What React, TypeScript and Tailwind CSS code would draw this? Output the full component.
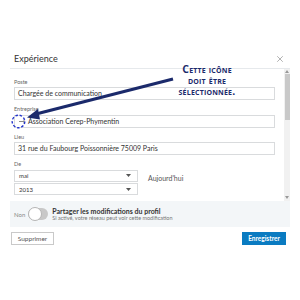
import { X } from 'lucide-react';

function Field({ label, value, icon }: { label: string; value: string; icon?: boolean }) {
  return (
    <div className="mt-[6px] first:mt-0">
      <div className="text-[5.5px] leading-[7px] text-[#666] mb-[1.5px]">{label}</div>
      <div className="h-[13px] border border-[#d9dbdd] flex items-center pl-[3px] text-[7px] text-[#333]">
        {icon && (
          <svg width="9" height="7" viewBox="0 0 9 7" className="mr-[1px]">
            <path d="M1 3.5h5M6 1.5v4" stroke="#8a8a8a" strokeWidth="1" fill="none" />
          </svg>
        )}
        <span>{value}</span>
      </div>
    </div>
  );
}

function Select({ value }: { value: string }) {
  return (
    <div className="h-[12px] w-[124px] border border-[#d9dbdd] flex items-center justify-between px-[4px] text-[6px] text-[#333]">
      <span>{value}</span>
      <svg width="5" height="3" viewBox="0 0 5 3" className="mr-[2px]">
        <path d="M0 0h5L2.5 3z" fill="#555" />
      </svg>
    </div>
  );
}

export default function App() {
  return (
    <div
      className="relative w-[300px] h-[300px] bg-white pt-[50px]"
      style={{ fontFamily: 'Lato, "Open Sans", sans-serif' }}
    >
      <div className="mx-[10px] h-[19px] pl-[4px] pr-[5px] flex items-center justify-between border-b border-[#e6e9ec]">
        <span className="text-[9px] text-[#333]">Expérience</span>
        <X size={10} strokeWidth={1.2} color="#666" />
      </div>

      <div className="mx-[10px] flex h-[132px]">
        <div className="flex-1 pl-[4px] pr-[9px] pt-[9.5px]">
          <Field label="Poste" value="Chargée de communication" />
          <Field label="Entreprise" value="Association Cerep-Phymentin" icon />
          <Field label="Lieu" value="31 rue du Faubourg Poissonnière 75009 Paris" />
          <div className="mt-[6px]">
            <div className="text-[5.5px] leading-[7px] text-[#666] mb-[1.5px]">De</div>
            <div className="flex items-start gap-[10px]">
              <div className="flex flex-col gap-[1.5px]">
                <Select value="mai" />
                <Select value="2013" />
              </div>
              <span className="text-[7px] text-[#555] mt-[3px]">Aujourd'hui</span>
            </div>
          </div>
        </div>
        <div className="w-[6px] bg-[#f1f1f1] flex flex-col items-center">
          <svg width="4" height="3" viewBox="0 0 4 3" className="mt-[1px]">
            <path d="M0 3h4L2 0z" fill="#999" />
          </svg>
          <div className="w-[5px] h-[46px] bg-[#c9c9c9] mt-[1px]" />
          <div className="flex-1" />
          <svg width="4" height="3" viewBox="0 0 4 3" className="mb-[2px]">
            <path d="M0 0h4L2 3z" fill="#999" />
          </svg>
        </div>
      </div>

      <div className="mx-[10px] h-[26px] bg-[#f3f6f8] flex items-center px-[4px]">
        <span className="text-[6px] text-[#888] mr-[3px]">Non</span>
        <div className="relative w-[20px] h-[12px] rounded-full bg-[#c8c8c8] mr-[4px]">
          <div className="absolute left-0 top-[-1px] w-[14px] h-[14px] rounded-full bg-white border border-[#b5b5b5]" />
        </div>
        <div className="flex flex-col leading-[8px]">
          <span className="text-[7px] font-bold text-[#333]">Partager les modifications du profil</span>
          <span className="text-[5.5px] text-[#777] leading-[7px]">Si activé, votre réseau peut voir cette modification</span>
        </div>
      </div>

      <div className="mx-[11px] mt-[5px] flex justify-between">
        <button className="h-[13px] w-[43px] border border-[#c9c9c9] text-[6.5px] text-[#555] bg-white">
          Supprimer
        </button>
        <button className="h-[13px] w-[44px] mr-[3px] bg-[#0a7bc1] text-[6.5px] font-bold text-white">
          Enregistrer
        </button>
      </div>

      <svg className="absolute left-0 top-0" width="300" height="300" viewBox="0 0 300 300">
        <line x1="173" y1="79" x2="36" y2="114" stroke="#1b2a6b" strokeWidth="3.2" />
        <polygon points="27,117.5 38,109 40,119.5" fill="#1b2a6b" />
        <circle cx="18.5" cy="121.5" r="6.3" fill="none" stroke="#2233cc" strokeWidth="1.4" strokeDasharray="2.5 1.8" />
      </svg>

      <div
        className="absolute left-[155px] top-[64px] w-[104px] text-center text-[10.5px] leading-[11px] font-bold tracking-[0.2px] text-[#1b2a6b]"
        style={{ fontVariant: 'small-caps', fontFamily: '"Open Sans", sans-serif' }}
      >
        Cette icône
        <br />
        doit être
        <br />
        sélectionnée.
      </div>
    </div>
  );
}
